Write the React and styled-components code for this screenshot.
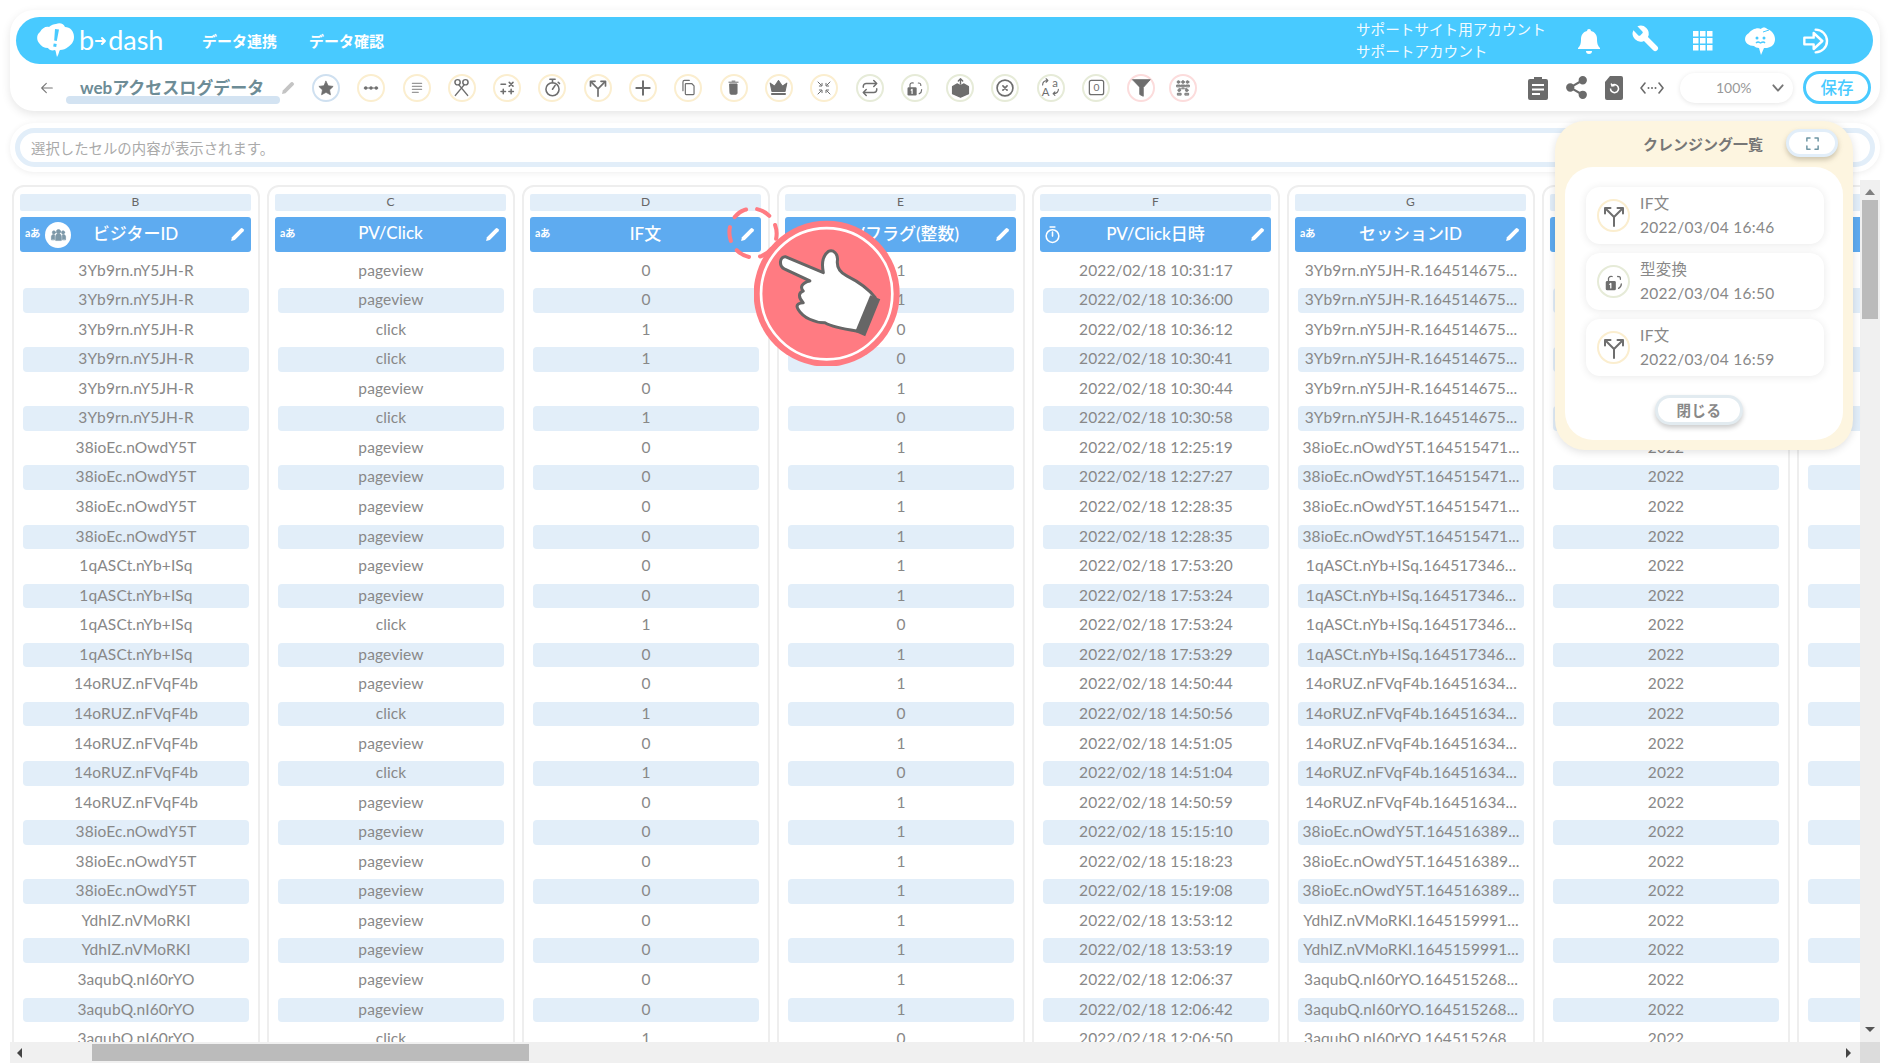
import React from "react";
import styled, { createGlobalStyle } from "styled-components";

const Global = createGlobalStyle`
  html, body { margin: 0; padding: 0; background: #fff; }
  body { width: 1890px; height: 1063px; overflow: hidden; font-family: Lato, "Noto Sans CJK JP", sans-serif; color: #888; }
  * { box-sizing: border-box; }
`;

const BLUE = "#48caff";
const GREY = "#6e6e6e";
const RING = { blue: "#cfe0f0", yellow: "#fbeecf", green: "#e6ebd8", pink: "#fcdcdc" };

const Page = styled.div`
  position: relative; width: 1890px; height: 1063px; padding: 10px 10px 0;
  display: flex; flex-direction: column; overflow: hidden;
`;
const TopCard = styled.header`
  height: 101px; flex: none; background: #fff; border-radius: 24px; padding: 7px 7px 0 6px;
  box-shadow: 0 3px 10px rgba(0,0,0,.1); display: flex; flex-direction: column;
`;
const NavBar = styled.nav`
  height: 47px; flex: none; background: ${BLUE}; border-radius: 24px; display: flex; align-items: center; padding-left: 19px; color: #fff;
`;
const Logo = styled.div` display: flex; align-items: center; width: 167px; flex: none; gap: 4px; `;
const LogoText = styled.span` font-family: Lato, sans-serif; font-size: 27px; font-weight: 400; line-height: 1; margin-top: -2px; white-space: nowrap; display: flex; align-items: center; `;
const LogoArrow = styled.svg` display: block; flex: none; margin: 3px 1px 0; `;
const NavLink = styled.a` font-size: 15px; font-weight: 700; width: 107px; flex: none; `;
const Account = styled.div`
  margin-left: auto; width: 204px; font-size: 14.6px; line-height: 22px; flex: none; color: #f2fbff;
  div { white-space: nowrap; }
`;
const HeaderIcons = styled.div` display: flex; align-items: center; padding-right: 28px; `;
const HeaderIcon = styled.span` width: 57px; display: flex; justify-content: center; align-items: center; flex: none; `;

const ToolRow = styled.div` flex: 1; display: flex; align-items: center; padding: 0 2px 0 23px; `;
const Back = styled.span` width: 16px; display: flex; margin-right: 11px; `;
const Title = styled.h1`
  position: relative; margin: 0; width: 214px; height: 30px; padding-left: 14px; font-size: 17px; font-weight: 700; color: #6d8c96; line-height: 29px; white-space: nowrap; flex: none;
  &::after { content: ""; position: absolute; left: 0; right: 0; bottom: -1px; height: 8px; border-radius: 4px; background: #d3e3f2; }
`;
const TitleText = styled.span` position: relative; z-index: 1; `;
const EditTitle = styled.span` width: 18px; display: flex; flex: none; margin-right: 14px; `;
const Tools = styled.div` display: flex; align-items: center; gap: 17.3px; `;
const Tool = styled.span`
  width: 28px; height: 28px; border-radius: 50%; border: 2px solid ${p => RING[p.$ring]}; display: flex; align-items: center; justify-content: center; flex: none; background: #fff;
  margin-left: ${p => p.$tight ? "-4px" : "0"};
`;
const RightTools = styled.div` margin-left: auto; display: flex; align-items: center; `;
const RightIcon = styled.span` width: ${p => p.$w}px; display: flex; justify-content: center; flex: none; `;
const ZoomPill = styled.div`
  width: 113px; height: 30px; margin-left: 9px; border-radius: 15px; background: #fff; box-shadow: 0 1px 5px rgba(0,0,0,.1);
  display: flex; align-items: center; padding-left: 36px; font-size: 14px; color: #999;
  span { width: 54px; }
`;
const SaveButton = styled.button`
  width: 68px; height: 33px; margin-left: 10px; border-radius: 17px; background: #fff; border: 3px solid ${BLUE}; color: ${BLUE}; font: 500 16.5px "Noto Sans CJK JP", sans-serif; padding: 0; line-height: 1;
`;

const InputCard = styled.div`
  height: 49px; flex: none; margin-top: 12px; background: #fff; border-radius: 24px; padding: 5px; box-shadow: 0 1px 6px rgba(0,0,0,.07);
`;
const CellInput = styled.div`
  height: 39px; border: 5px solid #e2eef9; border-radius: 20px; padding: 0 0 1px 11px; display: flex; align-items: center; font-size: 14.4px; color: #aaa;
`;

const DataArea = styled.section`
  margin-top: 8px; flex: none; display: grid; grid-template-columns: 1850px 20px; grid-template-rows: 862px 21px;
`;
const ColumnsView = styled.div` overflow: hidden; display: flex; gap: 7px; padding: 5px 0 0 2px; `;
const Column = styled.div`
  width: 248px; height: 880px; flex: none; border: 2px solid #eee; border-radius: 12px 12px 0 0; padding: 7px 7px 0 6px;
`;
const Letter = styled.div`
  height: 17px; background: #e2eef9; border-radius: 2px; text-align: center; font-size: 12px; line-height: 15px; color: #666;
`;
const HeaderCell = styled.div`
  position: relative; height: 35px; margin-top: 6px; background: #5eabf0; border-radius: 3px; color: #fff;
  display: flex; align-items: center; justify-content: center; font-size: 17px; font-weight: 500;
  white-space: nowrap; padding-bottom: 4px;
`;
const HeaderLeft = styled.span` position: absolute; left: ${p => p.$left}px; top: 0; bottom: 0; display: flex; align-items: center; gap: 5px; `;
const TypeBadge = styled.span` font-size: 10.5px; font-weight: 700; letter-spacing: -.3px; margin-bottom: 4px; `;
const PersonBadge = styled.span` width: 26px; height: 26px; border-radius: 50%; background: #fff; display: flex; align-items: center; justify-content: center; `;
const HeaderEdit = styled.span` position: absolute; right: 5px; top: 9px; display: flex; `;
const Rows = styled.div` margin-top: 6.5px; display: flex; flex-direction: column; gap: 5.07px; padding: 0 2px 0 3px; `;
const Row = styled.div`
  height: 24.5px; border-radius: 4px; background: ${p => p.$striped ? "#e2eef9" : "transparent"};
  font-size: 15.5px; line-height: 23px; text-align: center; color: #888; white-space: nowrap; overflow: hidden; letter-spacing: .12px;
`;

const VScroll = styled.div` background: #f0f0f0; display: flex; flex-direction: column; align-items: center; padding-top: 9px; `;
const ArrowUp = styled.i` width: 0; height: 0; border: 5px solid transparent; border-top: 0; border-bottom: 6px solid #808080; `;
const ArrowDown = styled.i` width: 0; height: 0; border: 5px solid transparent; border-bottom: 0; border-top: 5px solid #555; margin-top: auto; margin-bottom: 10px; `;
const VThumb = styled.div` width: 16px; height: 119px; background: #bbb; margin-top: 5px; `;
const HScroll = styled.div` background: #f0f0f0; display: flex; align-items: center; padding: 0 9px 0 7px; `;
const ArrowLeft = styled.i` width: 0; height: 0; border: 5px solid transparent; border-left: 0; border-right: 5px solid #444; `;
const ArrowRight = styled.i` width: 0; height: 0; border: 5px solid transparent; border-right: 0; border-left: 5px solid #444; margin-left: auto; `;
const HThumb = styled.div` width: 437px; height: 17px; background: #bbb; margin-left: 70px; `;
const Corner = styled.div` background: #dcdcdc; `;

const Popup = styled.aside`
  position: absolute; left: 1555px; top: 121px; width: 298px; height: 329px; background: #fdf5e0; border-radius: 30px;
  box-shadow: 0 2px 8px rgba(0,0,0,.12); padding: 8px 10px 10px; display: flex; flex-direction: column;
`;
const PopupHead = styled.div` height: 38px; flex: none; position: relative; display: flex; justify-content: center; align-items: center; padding: 0 0 9px 0; `;
const PopupTitle = styled.h2` margin: 0 0 0 -2px; font-size: 15px; font-weight: 700; color: #777; `;
const ExpandButton = styled.span`
  position: absolute; left: 221px; top: 0; width: 52px; height: 28px; background: #fff; border: 3px solid #e2eef9; border-radius: 14px;
  box-shadow: 0 3px 5px rgba(120,110,80,.35); display: flex; align-items: center; justify-content: center;
`;
const PopupBody = styled.div`
  flex: 1; background: #fff; border-radius: 28px; padding: 20px 19px 0 21px; display: flex; flex-direction: column; gap: 9px;
`;
const LogItem = styled.div`
  height: 57px; flex: none; border-radius: 14px; background: #fff; box-shadow: 0 1px 8px rgba(0,0,0,.09);
  display: flex; align-items: center; padding-left: 11px; gap: 10px;
`;
const LogIcon = styled.span`
  width: 33px; height: 33px; flex: none; border-radius: 50%; border: 2px solid ${p => RING[p.$ring]}; display: flex; align-items: center; justify-content: center;
`;
const LogText = styled.div` font-size: 15.5px; color: #888; line-height: 24px; letter-spacing: .3px; white-space: nowrap; padding-bottom: 2px; `;
const CloseButton = styled.button`
  align-self: flex-start; margin: 10px 0 0 69px; width: 88px; height: 30px; background: #fff; border: 3px solid #e2ebf0; border-radius: 15px;
  box-shadow: 0 3px 5px rgba(0,0,0,.2); color: #888; font: 700 14.5px "Noto Sans CJK JP", sans-serif; padding: 0 0 2px; letter-spacing: .5px;
`;

const DashRing = styled.svg` position: absolute; left: 726px; top: 204px; `;
const Pointer = styled.svg` position: absolute; left: 754px; top: 220px; `;

const Svg = styled.svg` display: block; flex: none; `;
const Ico = ({ s = 18, c = GREY, sw = 2, children }) => (
  <Svg width={s} height={s} viewBox="0 0 24 24" fill="none" stroke={c} strokeWidth={sw} strokeLinecap="round" strokeLinejoin="round">{children}</Svg>
);

const Split = ({ s }) => (
  <Ico s={s} sw={2}>
    <path d="M12 22v-9L4 5M12 13l8-8" />
    <path d="M3 9.500V4h5.500M21 9.500V4h-5.500" />
  </Ico>
);
const Convert = ({ s }) => (
  <Ico s={s} sw={1.4}>
    <rect x="3" y="11" width="11" height="10" rx="1.500" fill={GREY} stroke="none" />
    <path d="M6 11V8a3 3 0 0 1 4-2" />
    <path d="M16 6c2 0 3 0 3 3M20 14c0 2-1 4-3 5" />
    <path d="M8.500 13.500v5M7.400 14.600l1.100-1.100" stroke="#fff" />
  </Ico>
);

const tools = [
  ["blue", <Ico s={18} sw={1}><path fill={GREY} d="M12 3l2.900 6 6.600.9-4.800 4.600 1.200 6.500L12 17.800 6.100 21l1.200-6.500L2.500 9.900 9.100 9z" /></Ico>],
  ["yellow", <Ico s={18} sw={1.5}><path d="M3 12h18" /><circle cx="5" cy="12" r="1.500" fill={GREY} /><circle cx="12" cy="12" r="1.500" fill={GREY} /><circle cx="19" cy="12" r="1.500" fill={GREY} /></Ico>],
  ["yellow", <Ico s={16} sw={1.7} c="#999"><path d="M5 5h14M5 9.500h14M5 14h14M5 18.500h9" /></Ico>],
  ["yellow", <Ico s={21} sw={1.7}><circle cx="7.500" cy="6" r="3" /><circle cx="16.500" cy="6" r="3" /><path d="M9 9l10 12M15 9L5 21" /></Ico>],
  ["yellow", <Ico s={18}><path d="M4 7h6M15 4.500l5 5M20 4.500l-5 5M4 16.500h6M7 13.500v6M14.500 16.500h6M17.500 13.500v6" /></Ico>],
  ["yellow", <Ico s={21} sw={1.8}><circle cx="12" cy="14" r="7.500" /><path d="M9 2.500h6M12 2.500v4M12 14l3-4.500M18.500 6l1.500 1.500" /></Ico>],
  ["yellow", <Split s={20} />],
  ["yellow", <Ico s={20} sw={2.400}><path d="M12 4v16M4 12h16" /></Ico>],
  ["yellow", <Ico s={19} sw={1.500}><path d="M5 16V5a2 2 0 0 1 2-2h6" /><path d="M9 7h7l3 3v10a1 1 0 0 1-1 1H9a1 1 0 0 1-1-1V8a1 1 0 0 1 1-1z" /></Ico>],
  ["yellow", <Ico s={17} sw={1.400}><path fill={GREY} d="M7 7h10v13a1.500 1.500 0 0 1-1.500 1.500h-7A1.500 1.500 0 0 1 7 20z" /><path d="M5.500 4.500h13M10 3h4" /></Ico>],
  ["yellow", <Ico s={21} sw={1.200}><path fill={GREY} d="M2.500 7l5 3.500L12 4l4.500 6.500 5-3.500-2 9.500h-15z" /><path d="M4.500 19.500h15" strokeWidth="2.200" /></Ico>],
  ["yellow", <Ico s={16} sw={1.500}><path d="M3 3l5 5M21 3l-5 5M3 21l5-5M21 21l-5-5" /><path d="M9 5v4H5M15 5v4h4M9 19v-4H5M15 19v-4h4" /></Ico>],
  ["green", <Ico s={18} sw={1.900}><path d="m17 2 4 4-4 4M3 11v-1a4 4 0 0 1 4-4h14M7 22l-4-4 4-4M21 13v1a4 4 0 0 1-4 4H3" /></Ico>],
  ["green", <Convert s={20} />],
  ["green", <Ico s={21} sw={1.600}><path fill={GREY} d="M3 11l5-3 4 2 4-2 5 3v8l-9 4-9-4z" /><path d="M12 8V2M9.500 4.500L12 2l2.500 2.500" /></Ico>],
  ["green", <Ico s={20} sw={2}><circle cx="12" cy="12" r="9.500" /><path d="M9.500 9.500l5 5M14.500 9.500l-5 5" /></Ico>],
  ["green", <Ico s={21} sw={1.300}><text x="2" y="22" fontSize="13" fill={GREY} stroke="none" fontFamily="Lato">A</text><text x="14" y="11" fontSize="13" fill={GREY} stroke="none" fontFamily="Lato">a</text><path d="M3 9c0-3 2-5 6-5M9 4L7 2M9 4L7 6M21 14c0 3-2 5-6 5M15 19l2-2M15 19l2 2" /></Ico>],
  ["green", <Ico s={19} sw={1.600}><rect x="3" y="3" width="18" height="18" rx="2.500" /><text x="12" y="17" fontSize="13" textAnchor="middle" fill={GREY} stroke="none" fontFamily="Lato">0</text></Ico>],
  ["pink", <Ico s={21} sw={1}><path fill={GREY} d="M2 3h20l-8 9v10l-4-2v-8z" /></Ico>],
  ["pink", <Ico s={18} sw={1.300} c="#808080"><g fill="#808080"><circle cx="6" cy="4" r="1.800" /><circle cx="12" cy="4" r="1.800" /><circle cx="18" cy="4" r="1.800" /><circle cx="7" cy="15" r="1.800" /><circle cx="17" cy="15" r="1.800" /><path d="M3.500 10V8h5v2zM9.500 10V8h5v2zM15.500 10V8h5v2zM4.500 21v-2h5v2zM14.500 21v-2h5v2z" /></g><path d="M12 10v3M7 13h10" /></Ico>],
];

const dates = ["10:31:17","10:36:00","10:36:12","10:30:41","10:30:44","10:30:58","12:25:19","12:27:27","12:28:35","12:28:35","17:53:20","17:53:24","17:53:24","17:53:29","14:50:44","14:50:56","14:51:05","14:51:04","14:50:59","15:15:10","15:18:23","15:19:08","13:53:12","13:53:19","12:06:37","12:06:42","12:06:50"];
const clicks = new Set([2,3,5,12,15,17,26]);
const idGroups = [
  ["3Yb9rn.nY5JH-R", "3Yb9rn.nY5JH-R.164514675...", 6],
  ["38ioEc.nOwdY5T", "38ioEc.nOwdY5T.164515471...", 4],
  ["1qASCt.nYb+ISq", "1qASCt.nYb+ISq.164517346...", 4],
  ["14oRUZ.nFVqF4b", "14oRUZ.nFVqF4b.16451634...", 5],
  ["38ioEc.nOwdY5T", "38ioEc.nOwdY5T.164516389...", 3],
  ["YdhIZ.nVMoRKI", "YdhIZ.nVMoRKI.1645159991...", 2],
  ["3aqubQ.nI60rYO", "3aqubQ.nI60rYO.164515268...", 3],
];
const ids = idGroups.flatMap(([a, b, n]) => Array.from({ length: n }, () => [a, b]));
const idx = dates.map((_, i) => i);

const Pencil = ({ s = 16, c = "#fff" }) => (
  <Svg width={s} height={s} viewBox="0 0 24 24" fill={c}><path d="M3 21l1.200-5.200L16.500 3.500a2 2 0 0 1 2.800 0l1.200 1.200a2 2 0 0 1 0 2.800L8.200 19.800z" /></Svg>
);
const Aa = () => <TypeBadge>aあ</TypeBadge>;

const columns = [
  { l: "B", t: "ビジターID", left: <><Aa /><PersonBadge><Ico s={17} c="#7d98a8" sw={1}><g fill="#7d98a8"><circle cx="12" cy="8" r="3" /><circle cx="5.500" cy="9" r="2.200" /><circle cx="18.500" cy="9" r="2.200" /><path d="M8 20v-5a4 4 0 0 1 8 0v5zM2 19v-4a3 3 0 0 1 4.500-2.500V19zM22 19v-4a3 3 0 0 0-4.500-2.500V19z" /></g></Ico></PersonBadge></>, v: i => ids[i][0] },
  { l: "C", t: "PV/Click", left: <Aa />, v: i => clicks.has(i) ? "click" : "pageview" },
  { l: "D", t: "IF文", left: <Aa />, v: i => clicks.has(i) ? "1" : "0" },
  { l: "E", t: "CVフラグ(整数)", left: <Aa />, v: i => clicks.has(i) ? "0" : "1" },
  { l: "F", t: "PV/Click日時", left: <Ico s={19} c="#fff" sw={2}><circle cx="12" cy="14" r="8" /><path d="M9 2.500h6M12 14V9" /></Ico>, v: i => `2022/02/18 ${dates[i]}` },
  { l: "G", t: "セッションID", left: <Aa />, v: i => ids[i][1] },
  { l: "H", t: "年", left: <Aa />, v: () => "2022" },
  { l: "I", t: "月", left: <Aa />, v: () => "" },
];

export default function App() {
  return (
    <Page>
      <Global />
      <TopCard>
        <NavBar>
          <Logo>
            <Svg width="40" height="38" viewBox="0 0 40 38">
              <path fill="#fff" d="M21 2c4-2 8 0 9 3 5 0 9 4 9 10 0 5-3 8-6 10-2 2-5 3-8 3-1 1-1 4-3 7-1-3-1-6-2-7-3 1-6 0-7-2-4 0-7-2-9-5-3-4-2-9 1-11 2-4 6-6 9-5 2-2 5-3 7-3z" />
              <path fill={BLUE} d="M20 7l4 .5-2.200 11.500-2.600-.4zM18.700 21.500l3 .5-.5 3-3-.5z" />
            </Svg>
            <LogoText>
              b
              <LogoArrow width="12" height="10" viewBox="0 0 12 10" fill="none" stroke="#fff" strokeWidth="2" strokeLinecap="round" strokeLinejoin="round"><path d="M1 5h9M7 2l3 3-3 3" /></LogoArrow>
              dash
            </LogoText>
          </Logo>
          <NavLink>データ連携</NavLink>
          <NavLink>データ確認</NavLink>
          <Account>
            <div>サポートサイト用アカウント</div>
            <div>サポートアカウント</div>
          </Account>
          <HeaderIcons>
            <HeaderIcon>
              <Svg width="24" height="26" viewBox="0 0 24 26" fill="#fff"><path d="M12 1a2 2 0 0 1 2 2c4 1 6 4 6 8 0 5 1 7 3 9v1H1v-1c2-2 3-4 3-9 0-4 2-7 6-8a2 2 0 0 1 2-2z" /><path d="M9 23h6a3 3 0 0 1-6 0z" /></Svg>
            </HeaderIcon>
            <HeaderIcon>
              <Svg width="32" height="32" viewBox="0 0 24 24" fill="#fff" style={{ transform: "scaleX(-1) translateY(-2px)" }}><path d="M14.700 6.300a1 1 0 0 0 0 1.400l1.600 1.600a1 1 0 0 0 1.400 0l3.770-3.770a6 6 0 0 1-7.940 7.940l-6.910 6.910a2.120 2.120 0 0 1-3-3l6.910-6.910a6 6 0 0 1 7.940-7.940l-3.760 3.760z" /></Svg>
            </HeaderIcon>
            <HeaderIcon>
              <Svg width="20" height="20" viewBox="0 0 20 20" fill="#fff">
                {[0, 7, 14].flatMap(y => [0, 7, 14].map(x => <rect key={`${x}-${y}`} x={x} y={y} width="5.500" height="5.500" />))}
              </Svg>
            </HeaderIcon>
            <HeaderIcon>
              <Svg width="30" height="30" viewBox="0 0 30 30">
                <path fill="#fff" d="M16 3c1-2 5-2 6 0 4 1 8 5 8 10 0 4-2 7-5 8-2 1-4 1-6 1l-3 7-2-7c-2 0-4-1-5-2-5 0-9-3-9-7 0-3 2-5 4-6 2-3 8-6 12-4z" />
                <circle cx="12" cy="12" r="1.500" fill={BLUE} /><circle cx="19" cy="12" r="1.500" fill={BLUE} />
                <path d="M11 17c2-2 3-1 4.500 0 1.500-1 3-2 4.500 0" stroke={BLUE} strokeWidth="1.400" fill="none" />
                <path d="M18 6l6-2" stroke={BLUE} strokeWidth="1" fill="none" />
              </Svg>
            </HeaderIcon>
            <HeaderIcon>
              <Ico s={32} c="#fff" sw={1.800}><path d="M11 3.500a8.500 8.500 0 1 1 0 17" /><path d="M2.500 9.500h7V6l6.500 6-6.500 6v-3.500h-7z" /></Ico>
            </HeaderIcon>
          </HeaderIcons>
        </NavBar>
        <ToolRow>
          <Back><Ico s={16} c="#777" sw={1.600}><path d="M20 12H4M11 5l-7 7 7 7" /></Ico></Back>
          <Title><TitleText>webアクセスログデータ</TitleText></Title>
          <EditTitle><Pencil s={16} c="#c4c4c4" /></EditTitle>
          <Tools>
            {tools.map(([ring, icon], i) => <Tool key={i} $ring={ring} $tight={i === tools.length - 1}>{icon}</Tool>)}
          </Tools>
          <RightTools>
            <RightIcon $w={38}>
              <Svg width="22" height="26" viewBox="0 0 22 26" fill="#6b6b6b"><path d="M7 2h8v2h4a2 2 0 0 1 2 2v17a2 2 0 0 1-2 2H3a2 2 0 0 1-2-2V6a2 2 0 0 1 2-2h4z" /><path d="M5 10h12M5 14.500h12M5 19h8" stroke="#fff" strokeWidth="1.800" /></Svg>
            </RightIcon>
            <RightIcon $w={38}>
              <Ico s={25} c="#6b6b6b" sw={2}><circle cx="18" cy="5" r="3" fill="#6b6b6b" /><circle cx="6" cy="12" r="3" fill="#6b6b6b" /><circle cx="18" cy="19" r="3" fill="#6b6b6b" /><path d="M8.600 13.500l6.800 4M15.400 6.500l-6.800 4" /></Ico>
            </RightIcon>
            <RightIcon $w={38}>
              <Svg width="20" height="26" viewBox="0 0 20 26" fill="#6b6b6b"><path d="M6 1h11a2 2 0 0 1 2 2v20a2 2 0 0 1-2 2H3a2 2 0 0 1-2-2V7z" /><path d="M6.500 13.500a4 4 0 1 0 1.500-3M7.200 8.500l.8 2.500 2.500-.5" stroke="#fff" strokeWidth="1.500" fill="none" /></Svg>
            </RightIcon>
            <RightIcon $w={38}>
              <Ico s={24} c="#6b6b6b" sw={1.600}><path d="M5 7l-4 5 4 5M19 7l4 5-4 5" /><path d="M8.500 12h.01M12 12h.01M15.500 12h.01" strokeWidth="2" /></Ico>
            </RightIcon>
            <ZoomPill>
              <span>100%</span>
              <Ico s={16} c="#777" sw={2.800}><path d="M5 8l7 8 7-8" /></Ico>
            </ZoomPill>
            <SaveButton>保存</SaveButton>
          </RightTools>
        </ToolRow>
      </TopCard>

      <InputCard>
        <CellInput>選択したセルの内容が表示されます。</CellInput>
      </InputCard>

      <DataArea>
        <ColumnsView>
          {columns.map(col => (
            <Column key={col.l}>
              <Letter>{col.l}</Letter>
              <HeaderCell>
                <HeaderLeft $left={col.l === "F" ? 3 : 5}>{col.left}</HeaderLeft>
                <span>{col.t}</span>
                <HeaderEdit><Pencil s={17} /></HeaderEdit>
              </HeaderCell>
              <Rows>
                {idx.map(i => <Row key={i} $striped={i % 2 === 1}>{col.v(i)}</Row>)}
              </Rows>
            </Column>
          ))}
        </ColumnsView>
        <VScroll>
          <ArrowUp />
          <VThumb />
          <ArrowDown />
        </VScroll>
        <HScroll>
          <ArrowLeft />
          <HThumb />
          <ArrowRight />
        </HScroll>
        <Corner />
      </DataArea>

      <DashRing width="54" height="58" viewBox="0 0 54 58">
        <ellipse cx="27" cy="29" rx="23.500" ry="24.500" fill="none" stroke="#ff7b82" strokeWidth="4" strokeDasharray="14 11" strokeLinecap="round" transform="rotate(-20 27 29)" />
      </DashRing>
      <Pointer width="146" height="146" viewBox="163 118 436 436">
        <circle cx="380" cy="338" r="218" fill="#ff7b82" />
        <circle cx="380" cy="338" r="196" fill="none" stroke="#fff" strokeWidth="8" />
        <path fill="#fff" stroke="#666" strokeWidth="9" strokeLinejoin="round"
          d="M258 228L370 275C365 250 368 225 385 212C400 205 415 220 412 240C410 260 420 275 440 285C480 305 510 330 525 350L475 450C440 445 400 440 375 425C345 425 310 410 295 385C285 370 300 365 310 365C295 350 295 335 310 330C300 320 305 305 330 300L255 265C235 255 240 225 258 228Z" />
        <path fill="#666" d="M510 343L540 355L495 465L465 452Z" />
      </Pointer>

      <Popup>
        <PopupHead>
          <PopupTitle>クレンジング一覧</PopupTitle>
          <ExpandButton>
            <Ico s={15} c="#6f96a4" sw={2.400}><path d="M3 8V3h5M16 3h5v5M21 16v5h-5M8 21H3v-5" /></Ico>
          </ExpandButton>
        </PopupHead>
        <PopupBody>
          {[["yellow", <Split s={24} />, "IF文", "2022/03/04 16:46"], ["green", <Convert s={22} />, "型変換", "2022/03/04 16:50"], ["yellow", <Split s={24} />, "IF文", "2022/03/04 16:59"]].map(([ring, icon, name, date]) => (
            <LogItem key={date}>
              <LogIcon $ring={ring}>{icon}</LogIcon>
              <LogText><div>{name}</div><div>{date}</div></LogText>
            </LogItem>
          ))}
          <CloseButton>閉じる</CloseButton>
        </PopupBody>
      </Popup>
    </Page>
  );
}
